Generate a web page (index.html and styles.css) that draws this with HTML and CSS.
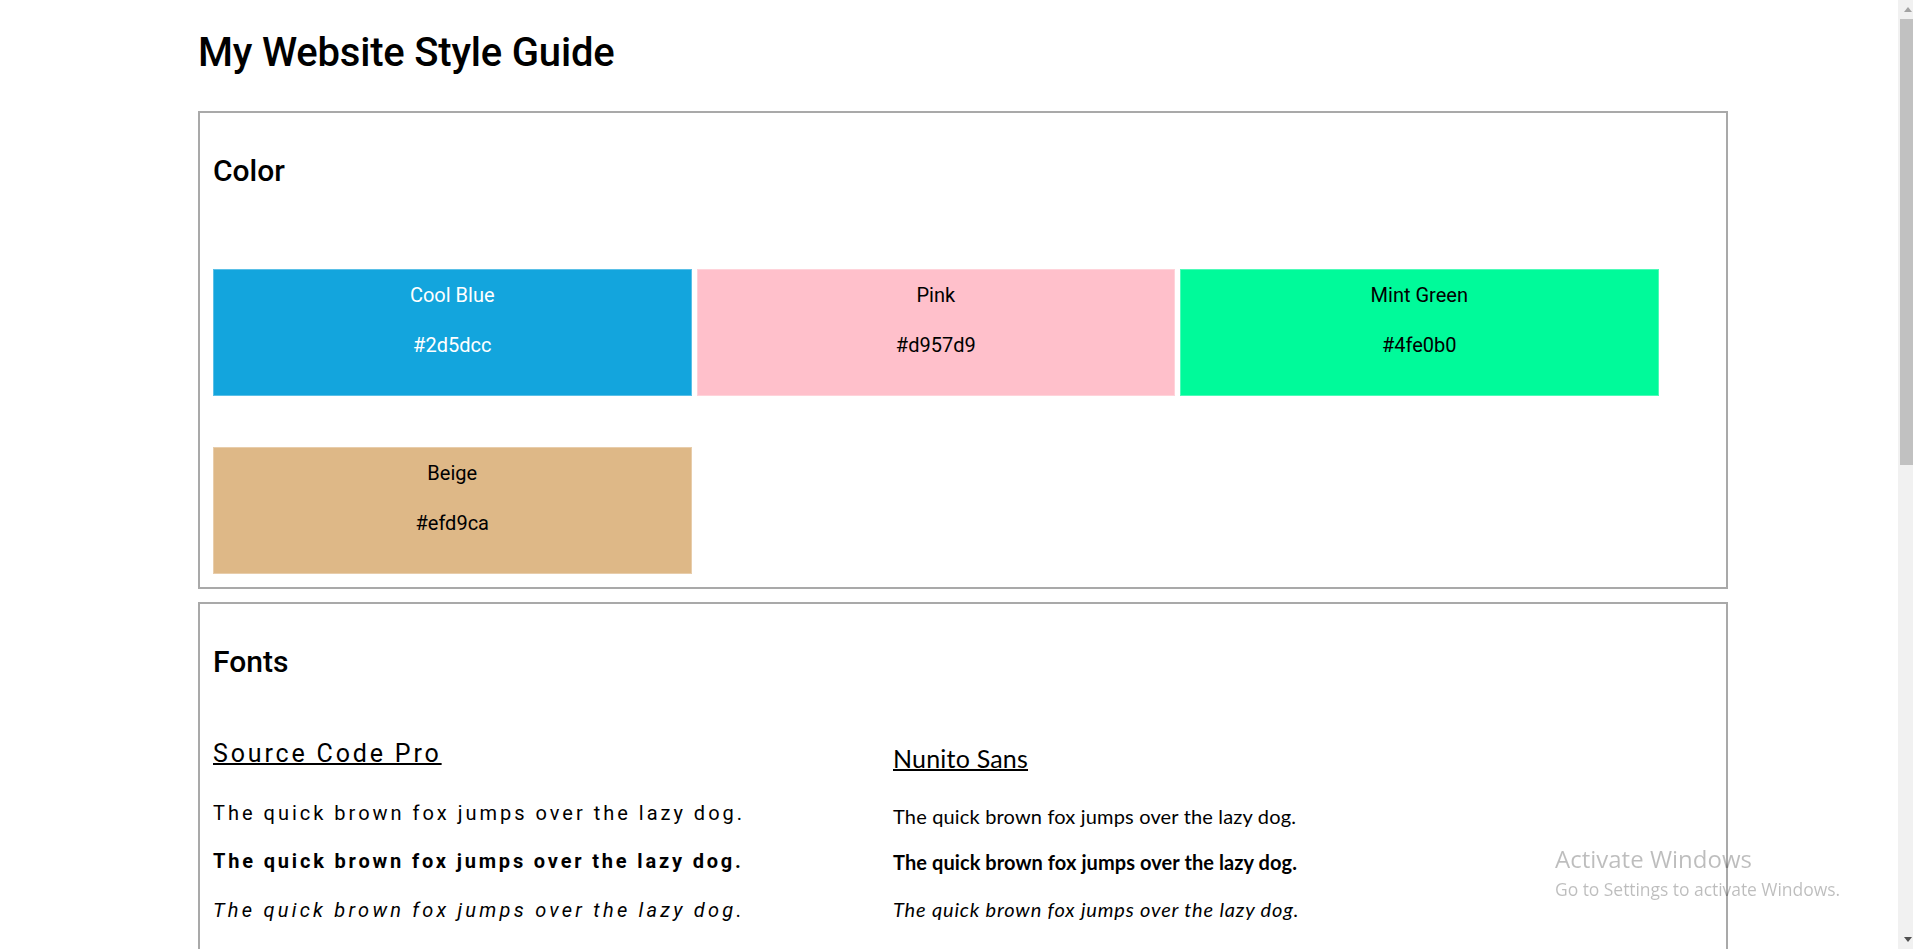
FILE: index.html
```html
<!DOCTYPE html>
<html lang="en">
<head>
<meta charset="utf-8">
<title>My Website Style Guide</title>
<link rel="stylesheet" href="styles.css">
</head>
<body>
<div class="viewport">
  <main class="page">
    <h1 class="title">My Website Style Guide</h1>

    <section class="panel">
      <h2 class="panel-title">Color</h2>
      <div class="swatches">
        <div class="swatch swatch-blue"><p>Cool Blue</p><p>#2d5dcc</p></div>
        <div class="swatch swatch-pink"><p>Pink</p><p>#d957d9</p></div>
        <div class="swatch swatch-mint"><p>Mint Green</p><p>#4fe0b0</p></div>
        <div class="swatch swatch-beige"><p>Beige</p><p>#efd9ca</p></div>
      </div>
    </section>

    <section class="panel panel-fonts">
      <h2 class="panel-title">Fonts</h2>
      <div class="font-grid">
        <div class="font-col font-source">
          <h3 class="font-name">Source Code Pro</h3>
          <p class="sample">The quick brown fox jumps over the lazy dog.</p>
          <p class="sample sample-bold">The quick brown fox jumps over the lazy dog.</p>
          <p class="sample sample-italic">The quick brown fox jumps over the lazy dog.</p>
        </div>
        <div class="font-col font-nunito">
          <h3 class="font-name">Nunito Sans</h3>
          <p class="sample">The quick brown fox jumps over the lazy dog.</p>
          <p class="sample sample-bold">The quick brown fox jumps over the lazy dog.</p>
          <p class="sample sample-italic">The quick brown fox jumps over the lazy dog.</p>
        </div>
      </div>
    </section>
  </main>

  <div class="scrollbar">
    <div class="sb-btn sb-up"></div>
    <div class="sb-thumb"></div>
    <div class="sb-track"></div>
    <div class="sb-btn sb-down"></div>
  </div>
</div>

<div class="watermark">
  <div class="wm-title">Activate Windows</div>
  <div class="wm-sub">Go to Settings to activate Windows.</div>
</div>
</body>
</html>
```

FILE: styles.css
```css
html, body {
  margin: 0;
  padding: 0;
  height: 100%;
  overflow: hidden;
}

body {
  font-family: Roboto, "Liberation Sans", Arial, sans-serif;
  color: #000;
  background: #fff;
}

.viewport {
  display: flex;
  height: 100vh;
  overflow: hidden;
}

.page {
  flex: 1;
  min-width: 0;
  padding: 29px 0 0 198px;
}

.title {
  margin: 0 0 34px;
  font-size: 40px;
  line-height: 48px;
  font-weight: 500;
  letter-spacing: -0.2px;
}

.panel {
  width: 1530px;
  box-sizing: border-box;
  border: 2px solid #a9a9a9;
  padding: 13px;
  margin-bottom: 13px;
}

.panel-title {
  margin: 27px 0 0;
  font-size: 30px;
  line-height: 36px;
  font-weight: 500;
}

.swatches {
  display: flex;
  flex-wrap: wrap;
  column-gap: 5px;
  row-gap: 51px;
  margin-top: 80px;
}

.swatch {
  width: 478.5px;
  height: 127px;
  box-sizing: border-box;
  padding-top: 14px;
  text-align: center;
  font-size: 20px;
  box-shadow: inset 0 0 0 1px rgba(255, 255, 255, 0.3);
}

.swatch p {
  margin: 0;
  line-height: 24px;
}

.swatch p + p {
  margin-top: 26px;
}

.swatch-blue  { background: #13a5dd; color: #fff; }
.swatch-pink  { background: #ffc0cb; }
.swatch-mint  { background: #00fa9a; }
.swatch-beige { background: #deb887; }

.font-grid {
  display: grid;
  grid-template-columns: 680px 1fr;
  margin-top: 59px;
  padding-bottom: 60px;
}

.font-name {
  margin: 0;
  font-size: 25px;
  line-height: 30px;
  font-weight: 400;
  text-decoration: underline;
  text-decoration-thickness: 2px;
  text-underline-offset: 1px;
}

.sample {
  margin: 24.5px 0 0;
  font-size: 20px;
  line-height: 24px;
}

.sample-bold { font-weight: 700; }
.sample-italic { font-style: italic; }

.font-source {
  font-family: Roboto, "Liberation Sans", sans-serif;
  letter-spacing: 3px;
}

.font-source .font-name { letter-spacing: 2.84px; }
.font-source .sample-bold { letter-spacing: 2.83px; }
.font-source .sample-italic { letter-spacing: 3.25px; }

.font-source .font-name + .sample {
  margin-top: 31.5px;
}

.font-nunito {
  font-family: Lato, "Open Sans", sans-serif;
  letter-spacing: 0.17px;
}

.font-nunito .font-name {
  margin-top: 4.3px;
  letter-spacing: 0.2px;
}

.font-nunito .sample {
  margin-top: 22.7px;
}

.font-nunito .sample-bold { letter-spacing: 0.08px; }
.font-nunito .sample-italic { letter-spacing: 0.83px; }

.font-nunito .font-name + .sample {
  margin-top: 30.3px;
}

/* fake window scrollbar */
.scrollbar {
  width: 15px;
  flex: none;
  display: flex;
  flex-direction: column;
  background: #f1f1f1;
}

.sb-btn {
  height: 19px;
  flex: none;
  display: flex;
  align-items: center;
  padding-left: 6px;
}

.sb-up::before {
  content: "";
  border-left: 4px solid transparent;
  border-right: 4px solid transparent;
  border-bottom: 5px solid #a3a3a3;
}

.sb-down::before {
  content: "";
  border-left: 4px solid transparent;
  border-right: 4px solid transparent;
  border-top: 5px solid #505050;
}

.sb-thumb {
  height: 446px;
  flex: none;
  margin-left: 2px;
  background: #c1c1c1;
}

.sb-track {
  flex: 1;
}

/* OS activation watermark overlay */
.watermark {
  position: fixed;
  left: 1555px;
  top: 844px;
  font-family: "Open Sans", "Noto Sans", sans-serif;
  color: rgba(0, 0, 0, 0.26);
  pointer-events: none;
  white-space: nowrap;
}

.wm-title {
  font-size: 24px;
  line-height: 30px;
  letter-spacing: 0;
}

.wm-sub {
  margin-top: 3px;
  font-size: 17.5px;
  line-height: 24px;
  letter-spacing: -0.05px;
}
```
